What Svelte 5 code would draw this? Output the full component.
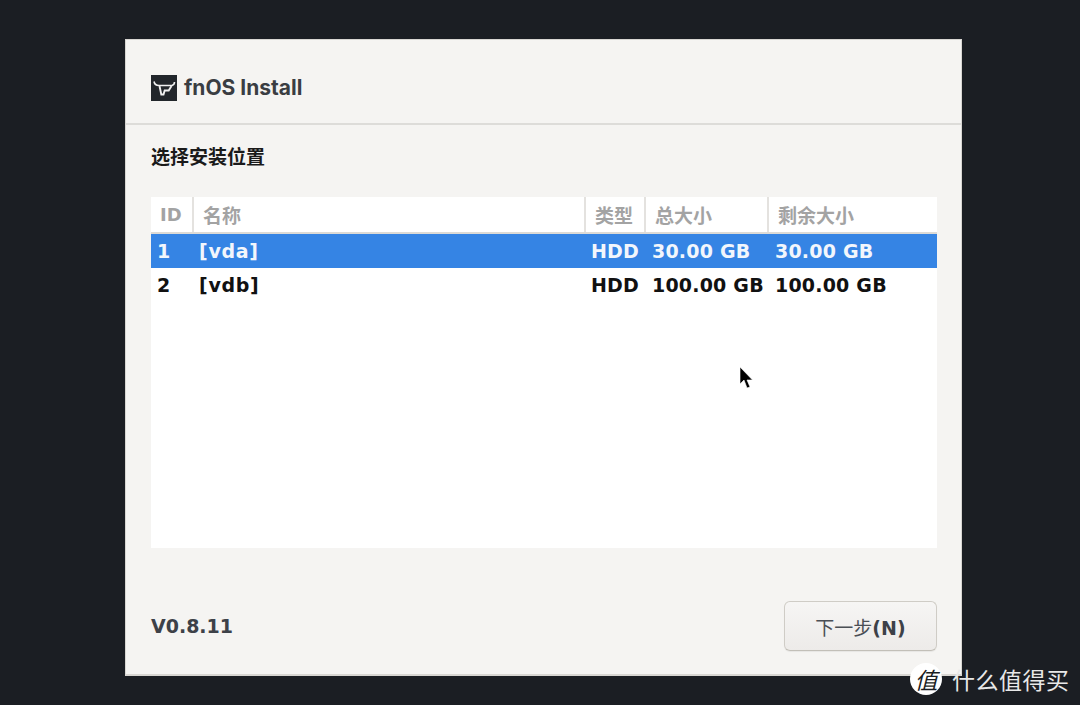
<script>
  const disks = [
    { id: 1, name: '[vda]', type: 'HDD', total: '30.00 GB', free: '30.00 GB' },
    { id: 2, name: '[vdb]', type: 'HDD', total: '100.00 GB', free: '100.00 GB' }
  ];
  let selected = $state(1);
</script>

<div class="screen">
  <div class="window">
    <header>
      <svg class="logo" viewBox="0 0 26 26" width="26" height="26">
        <rect width="26" height="26" fill="#22262b" />
        <path d="M3 6.500c.5 2.800 2.500 4 5 4h13c1.500-.5 2.500-1.800 2.500-3.500" fill="none" stroke="#f0f0f0" stroke-width="1.600" />
        <path d="M8.500 11l1.800 8.500h2.200l1.200-4h4l2.800-4.500" fill="none" stroke="#f0f0f0" stroke-width="1.900" />
      </svg>
      <span class="title">fnOS Install</span>
    </header>

    <main>
      <h2>选择安装位置</h2>
      <div class="list">
        <div class="row head">
          <span>ID</span>
          <span>名称</span>
          <span>类型</span>
          <span>总大小</span>
          <span>剩余大小</span>
        </div>
        {#each disks as d}
          <button class="row item" class:active={selected === d.id} onclick={() => (selected = d.id)}>
            <span>{d.id}</span>
            <span class="name">{d.name}</span>
            <span>{d.type}</span>
            <span>{d.total}</span>
            <span>{d.free}</span>
          </button>
        {/each}
      </div>
    </main>

    <footer>
      <span class="version">V0.8.11</span>
      <button class="next">下一步<b>(N)</b></button>
    </footer>
  </div>

  <svg class="cursor" viewBox="0 0 14 22" width="14" height="22">
    <path d="M1 0v17l4-4 3 8 3-1-3-7h5.500z" fill="#000" stroke="#fff" stroke-width="0.600" />
  </svg>

  <div class="mark">
    <span class="badge">值</span>
    <span class="mark-text">什么值得买</span>
  </div>
</div>

<style>
  :global(body) {
    margin: 0;
    background: #1b1e23;
  }
  .screen {
    position: relative;
    box-sizing: border-box;
    height: 705px;
    padding: 39px 118px 0 125px;
    background: #1b1e23;
    font-family: "DejaVu Sans", "Noto Sans CJK SC", sans-serif;
    overflow: hidden;
  }
  .window {
    display: flex;
    flex-direction: column;
    height: 637px;
    box-sizing: border-box;
    background: #f5f4f2;
    border: 1px solid #d8d6d2;
    border-width: 1px 1px 2px 1px;
  }
  header {
    display: flex;
    align-items: center;
    gap: 7px;
    height: 85px;
    flex: none;
    box-sizing: border-box;
    padding: 12px 25px 0;
    border-bottom: 2px solid #dddcd9;
  }
  .logo {
    flex: none;
  }
  .title {
    font-family: Inter, "Noto Sans", sans-serif;
    font-size: 21px;
    font-weight: 700;
    color: #3a3d42;
  }
  main {
    flex: none;
    padding: 0 24px 0 25px;
  }
  h2 {
    margin: 0;
    padding: 18px 0 28px;
    font-family: "Noto Sans CJK SC", sans-serif;
    font-size: 19px;
    line-height: 26px;
    font-weight: 700;
    color: #1a1a1a;
  }
  .list {
    height: 351px;
    background: #fff;
  }
  .row {
    display: grid;
    grid-template-columns: 41px 392px 60px 123px 1fr;
    width: 100%;
    align-items: center;
  }
  .head {
    height: 37px;
    box-sizing: border-box;
    border-bottom: 2px solid #dcdad6;
    color: #a3a3a3;
    font-family: "Noto Sans CJK SC", sans-serif;
    font-size: 19px;
    font-weight: 700;
  }
  .head span {
    height: 35px;
    line-height: 35px;
    padding-left: 9px;
    box-sizing: border-box;
    border-left: 2px solid #e4e2df;
  }
  .head span:first-child {
    border-left: none;
    padding-left: 9px;
    font-family: "DejaVu Sans", sans-serif;
    font-size: 18px;
  }
  .item {
    height: 34px;
    padding: 0;
    border: none;
    background: none;
    text-align: left;
    color: #111;
    font-family: inherit;
    font-size: 19px;
    font-weight: 700;
    letter-spacing: 0.2px;
  }
  .item span {
    padding-left: 7px;
    white-space: nowrap;
  }
  .item span:first-child {
    padding-left: 6px;
  }
  .item .name {
    letter-spacing: 0.7px;
  }
  .item span:nth-child(4),
  .item span:nth-child(5) {
    padding-left: 8px;
  }
  .item.active {
    background: #3584e4;
    color: #f2f6fc;
  }
  footer {
    flex: none;
    display: flex;
    align-items: center;
    justify-content: space-between;
    padding: 53px 24px 0 25px;
  }
  .version {
    font-size: 19px;
    font-weight: 700;
    color: #3d4148;
  }
  .next {
    width: 153px;
    height: 50px;
    border: 1px solid #cfccc6;
    border-bottom-color: #c2bfb8;
    border-radius: 6px;
    background: linear-gradient(to bottom, #f6f5f4, #edebe9);
    color: #4b4f55;
    font-family: "Noto Sans CJK SC", sans-serif;
    font-size: 19px;
    box-shadow: 0 1px 1px rgba(0, 0, 0, 0.06);
  }
  .next b {
    font-family: "DejaVu Sans", sans-serif;
    font-size: 19px;
    color: #3d4148;
  }
  .cursor {
    position: absolute;
    left: 739px;
    top: 367px;
  }
  .mark {
    position: absolute;
    left: 910px;
    top: 662px;
    display: flex;
    align-items: center;
    gap: 10px;
  }
  .badge {
    width: 32px;
    height: 32px;
    border-radius: 50%;
    background: #fff;
    color: #1b1e23;
    font-family: "Noto Sans CJK SC", sans-serif;
    font-size: 23px;
    line-height: 32px;
    text-align: center;
    font-style: italic;
  }
  .mark-text {
    font-family: "Noto Sans CJK SC", sans-serif;
    font-size: 23px;
    color: #e8e8e8;
    letter-spacing: 0.5px;
  }
</style>
